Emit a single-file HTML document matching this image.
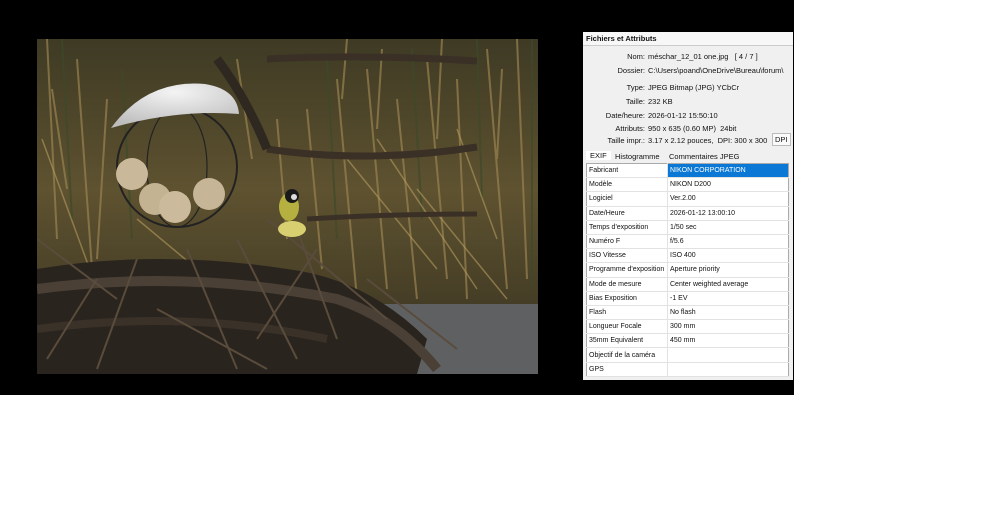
<!DOCTYPE html>
<html><head><meta charset="utf-8"><style>
body{margin:0;width:1005px;height:530px;background:#fff;position:relative;overflow:hidden;font-family:"Liberation Sans",sans-serif}
#blk{position:absolute;left:0;top:0;width:794px;height:395px;background:#000}
#photo{position:absolute;left:37px;top:39px;width:501px;height:335px}
#panel{position:absolute;left:583px;top:32px;width:210px;height:348px;background:#f0f0f0;font-size:7.5px;color:#111}
.hd{height:13px;line-height:13px;font-weight:bold;padding-left:3px;border-bottom:1px solid #ccc;background:#f7f7f7}
.ln{position:absolute;white-space:nowrap}
.lb{position:absolute;text-align:right;width:62px}
.tabs{position:absolute;top:118px;left:0;width:210px;height:12px}
.tabs span{position:absolute;top:2px}
table{position:absolute;left:3px;top:131px;width:203px;border-collapse:collapse;background:#fff;border:1px solid #aaa}
td{height:13.2px;padding:0 0 0 2px;border-bottom:1px solid #e2e2e2;font-size:7px;white-space:nowrap;overflow:hidden}
td:first-child{width:78px;border-right:1px solid #e2e2e2}
</style></head><body>
<div id="blk"></div>
<svg id="photo" viewBox="0 0 501 335" preserveAspectRatio="none">
<defs>
<linearGradient id="bg" x1="0" y1="0" x2="0" y2="1"><stop offset="0" stop-color="#3e3a24"/><stop offset=".45" stop-color="#5e5230"/><stop offset="1" stop-color="#35301f"/></linearGradient>
<radialGradient id="dome" cx=".5" cy=".2" r=".8"><stop offset="0" stop-color="#f4f4f4"/><stop offset="1" stop-color="#bdbdbd"/></radialGradient>
</defs>
<rect width="501" height="335" fill="url(#bg)"/>
<g stroke="#9a8350" stroke-width="2" opacity=".7">
<path d="M10 0L20 200M40 20L55 230M70 60L60 220M300 40L320 260M330 30L350 250M360 60L380 260M390 20L410 240M420 40L430 260M450 10L470 250M480 0L490 240M270 70L285 230M240 80L250 200M15 50L30 150M200 20L215 120M310 0L305 60M345 10L340 90M405 0L400 100M465 30L460 120"/>
</g>
<g stroke="#3d4a2a" stroke-width="2" opacity=".7">
<path d="M25 0L35 180M85 30L95 200M290 20L300 200M375 10L385 180M440 0L445 160M495 0L495 250"/>
</g>
<g stroke="#b59c5f" stroke-width="1.5" opacity=".6">
<path d="M310 120L400 230M340 100L440 250M380 150L470 260M5 100L60 250M100 180L160 230M420 90L460 200"/>
</g>
<path d="M230 20Q330 15 440 22" stroke="#3b3026" stroke-width="7" fill="none"/>
<path d="M230 110Q330 125 440 108" stroke="#3b3026" stroke-width="7" fill="none"/>
<path d="M270 180Q350 175 440 175" stroke="#3b3026" stroke-width="5" fill="none"/>
<path d="M180 20Q210 60 230 110" stroke="#2f2820" stroke-width="9" fill="none"/>
<path d="M340 265L501 265L501 335L330 335Z" fill="#5f6062"/>
<path d="M0 230Q120 210 250 230Q330 240 390 300L380 335L0 335Z" fill="#2a241e"/>
<path d="M0 250Q150 230 300 260Q360 280 400 330" stroke="#4a4036" stroke-width="10" fill="none"/>
<path d="M0 290Q150 270 290 300" stroke="#3a3128" stroke-width="8" fill="none"/>
<g stroke="#5a4c3c" stroke-width="2" fill="none">
<path d="M150 210L200 330M200 200L260 320M260 190L300 300M100 220L60 330M230 180L350 280M280 210L220 300M120 270L230 330M330 240L420 310M0 200L80 260M60 240L10 320"/>
</g>
<circle cx="140" cy="128" r="60" fill="none" stroke="#222" stroke-width="2"/>
<ellipse cx="140" cy="128" rx="30" ry="60" fill="none" stroke="#222" stroke-width="1.2"/>
<circle cx="95" cy="135" r="16" fill="#c9b99a"/>
<circle cx="118" cy="160" r="16" fill="#c4b393"/>
<circle cx="138" cy="168" r="16" fill="#cbbb9c"/>
<circle cx="172" cy="155" r="16" fill="#c6b596"/>
<path d="M74 89Q110 40 168 45Q200 50 202 75Q140 70 74 89Z" fill="url(#dome)"/>
<ellipse cx="252" cy="168" rx="10" ry="14" fill="#b5b040"/>
<circle cx="255" cy="157" r="7" fill="#1a1a1a"/>
<circle cx="257" cy="158" r="3" fill="#ddd"/>
<ellipse cx="255" cy="190" rx="14" ry="8" fill="#d8d070"/>
</svg>
<div id="panel">
<div class="hd">Fichiers et Attributs</div>
<div class="lb" style="top:20px">Nom:</div><div class="ln" style="left:65px;top:20px">méschar_12_01 one.jpg &nbsp; [ 4 / 7 ]</div>
<div class="lb" style="top:34px">Dossier:</div><div class="ln" style="left:65px;top:34px">C:\Users\poand\OneDrive\Bureau\forum\</div>
<div class="lb" style="top:51px">Type:</div><div class="ln" style="left:65px;top:51px">JPEG Bitmap (JPG) YCbCr</div>
<div class="lb" style="top:65px">Taille:</div><div class="ln" style="left:65px;top:65px">232 KB</div>
<div class="lb" style="top:79px">Date/heure:</div><div class="ln" style="left:65px;top:79px">2026-01-12 15:50:10</div>
<div class="lb" style="top:92px">Attributs:</div><div class="ln" style="left:65px;top:92px">950 x 635 (0.60 MP) &nbsp;24bit</div>
<div class="lb" style="top:104px">Taille impr.:</div><div class="ln" style="left:65px;top:104px">3.17 x 2.12 pouces, &nbsp;DPI: 300 x 300</div>
<div class="ln" style="left:189px;top:101px;border:1px solid #bbb;background:#fafafa;padding:1px 2px">DPI</div>
<div class="tabs"><span style="left:3px;background:#fff;padding:0 4px;top:1px">EXIF</span><span style="left:32px">Histogramme</span><span style="left:86px">Commentaires JPEG</span></div>
<table>
<tr><td>Fabricant</td><td style="background:#0a78d4;color:#fff">NIKON CORPORATION</td></tr>
<tr><td>Modèle</td><td>NIKON D200</td></tr>
<tr><td>Logiciel</td><td>Ver.2.00</td></tr>
<tr><td>Date/Heure</td><td>2026-01-12 13:00:10</td></tr>
<tr><td>Temps d'exposition</td><td>1/50 sec</td></tr>
<tr><td>Numéro F</td><td>f/5.6</td></tr>
<tr><td>ISO Vitesse</td><td>ISO 400</td></tr>
<tr><td>Programme d'exposition</td><td>Aperture priority</td></tr>
<tr><td>Mode de mesure</td><td>Center weighted average</td></tr>
<tr><td>Bias Exposition</td><td>-1 EV</td></tr>
<tr><td>Flash</td><td>No flash</td></tr>
<tr><td>Longueur Focale</td><td>300 mm</td></tr>
<tr><td>35mm Equivalent</td><td>450 mm</td></tr>
<tr><td>Objectif de la caméra</td><td></td></tr>
<tr><td>GPS</td><td></td></tr>
</table>
</div>
</body></html>
